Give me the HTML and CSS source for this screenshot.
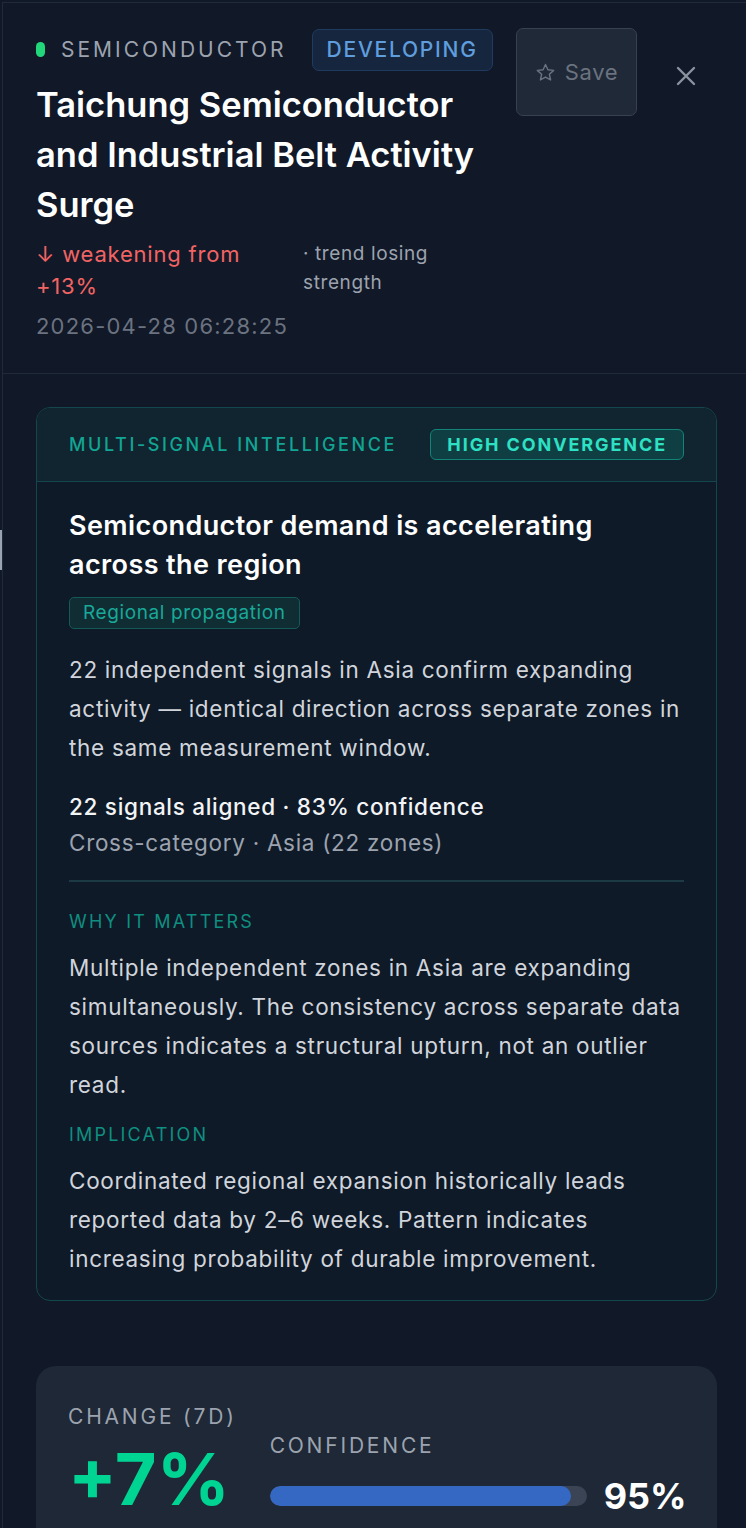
FILE: index.html
```html
<!DOCTYPE html>
<html lang="en">
<head>
<meta charset="UTF-8">
<meta name="viewport" content="width=device-width, initial-scale=1.0">
<title>Signal detail</title>
<link rel="stylesheet" href="styles.css">
</head>
<body>
    <div class="edge_tab"></div>
    <div class="panel">
        <div class="panel_head">
            <div class="head_main">
                <div class="meta_row">
                    <span class="cat_dot"></span>
                    <span class="cat_name">SEMICONDUCTOR</span>
                    <span class="status_badge">DEVELOPING</span>
                </div>
                <h1 class="event_title">Taichung Semiconductor and Industrial Belt Activity Surge</h1>
                <div class="trend_row">
                    <span class="trend_dir">↓ weakening from +13%</span>
                    <span class="trend_note">· trend losing strength</span>
                </div>
                <div class="stamp">2026-04-28 06:28:25</div>
            </div>
            <button class="save_btn">
                <svg width="21" height="21" viewBox="0 0 24 24" fill="none" stroke="currentColor" stroke-width="1.6" stroke-linejoin="round"><path d="M12 2.8l2.75 6.1 6.65.65-5 4.45 1.45 6.55L12 17.2l-5.85 3.35 1.45-6.55-5-4.45 6.65-.65z"/></svg>
                <span>Save</span>
            </button>
            <button class="close_btn" aria-label="Close">
                <svg width="20" height="20" viewBox="0 0 20 20" stroke="currentColor" stroke-width="2.4" stroke-linecap="round"><path d="M2 2L18 18M18 2L2 18"/></svg>
            </button>
        </div>

        <div class="panel_body">
            <div class="intel_card">
                <div class="intel_head">
                    <span class="intel_label">MULTI-SIGNAL INTELLIGENCE</span>
                    <span class="conv_badge">HIGH CONVERGENCE</span>
                </div>
                <div class="intel_body">
                    <h2 class="intel_title">Semiconductor demand is accelerating across the region</h2>
                    <span class="prop_tag">Regional propagation</span>
                    <p class="intel_text">22 independent signals in Asia confirm expanding activity — identical direction across separate zones in the same measurement window.</p>
                    <div class="intel_stats">
                        <div class="stats_main">22 signals aligned · 83% confidence</div>
                        <div class="stats_sub">Cross-category · Asia (22 zones)</div>
                    </div>
                    <div class="intel_divider"></div>
                    <div class="sub_label">WHY IT MATTERS</div>
                    <p class="intel_text tight">Multiple independent zones in Asia are expanding simultaneously. The consistency across separate data sources indicates a structural upturn, not an outlier read.</p>
                    <div class="sub_label second">IMPLICATION</div>
                    <p class="intel_text tight">Coordinated regional expansion historically leads reported data by 2–6 weeks. Pattern indicates increasing probability of durable improvement.</p>
                </div>
            </div>

            <div class="metric_card">
                <div class="metric_change">
                    <div class="metric_label">CHANGE (7D)</div>
                    <div class="change_value">+7%</div>
                </div>
                <div class="metric_conf">
                    <div class="metric_label">CONFIDENCE</div>
                    <div class="conf_row">
                        <div class="conf_track"><div class="conf_fill" style="width: 95%;"></div></div>
                        <span class="conf_value">95%</span>
                    </div>
                </div>
            </div>
        </div>
    </div>
</body>
</html>
```

FILE: styles.css
```css
body{
    margin: 0px;
    background-color: #111827;
    font-family: Inter, "Noto Sans", sans-serif;
    color: #e5e7eb;
}
.edge_tab{
    position: absolute;
    left: 0;
    top: 530px;
    width: 2px;
    height: 40px;
    background-color: #9aa3b0;
}
.panel{
    margin-left: 2px;
    margin-top: 2px;
    border-left: 1px solid #1f2a3a;
    border-top: 1px solid #1f2a3a;
    min-height: 1526px;
}
.panel_head{
    display: flex;
    align-items: flex-start;
    padding: 25px 40px 31px 33px;
    border-bottom: 1px solid #1f2a3a;
}
.head_main{
    flex: 1;
    min-width: 0;
}
.meta_row{
    display: flex;
    align-items: center;
    height: 43px;
}
.cat_dot{
    flex-shrink: 0;
    width: 9px;
    height: 15px;
    border-radius: 5px;
    background-color: #22d67a;
    margin-right: 16px;
}
.cat_name{
    font-size: 21px;
    letter-spacing: 3px;
    color: #9ca3af;
}
.status_badge{
    flex-shrink: 0;
    margin-left: 25px;
    height: 40px;
    display: flex;
    align-items: center;
    padding: 0 14px;
    border: 1.5px solid #1f3b60;
    background-color: #16263f;
    border-radius: 7px;
    color: #5f9ddd;
    font-size: 21px;
    font-weight: 500;
    letter-spacing: 1.75px;
}
.event_title{
    margin: 9px 0 0 0;
    font-size: 34.5px;
    line-height: 50px;
    font-weight: 600;
    color: #ffffff;
}
.trend_row{
    display: flex;
    margin-top: 8px;
}
.trend_dir{
    width: 245px;
    font-size: 22px;
    letter-spacing: 0.8px;
    line-height: 32px;
    color: #f26464;
    margin-right: 22px;
}
.trend_note{
    width: 150px;
    font-size: 19px;
    letter-spacing: 0.6px;
    line-height: 29px;
    color: #9ca3af;
    padding-top: 1px;
}
.stamp{
    margin-top: 8px;
    font-size: 22px;
    letter-spacing: 1.2px;
    line-height: 32px;
    color: #6b7280;
}
.save_btn{
    margin-left: 25px;
    width: 121px;
    height: 88px;
    display: flex;
    align-items: center;
    justify-content: center;
    gap: 9px;
    background-color: #1f2937;
    border: 1.5px solid #374151;
    border-radius: 7px;
    color: #6b7280;
    font-family: Inter, sans-serif;
    font-size: 22px;
    letter-spacing: 0.6px;
    padding: 0;
}
.close_btn{
    margin-left: 29px;
    margin-top: 35px;
    width: 40px;
    height: 26px;
    display: flex;
    align-items: center;
    justify-content: center;
    background: none;
    border: none;
    color: #8b93a0;
    padding: 0;
}
.panel_body{
    padding: 33px 29px 0 33px;
}
.intel_card{
    border: 1.5px solid #14474d;
    border-radius: 14px;
    background-color: #0f1a28;
    overflow: hidden;
}
.intel_head{
    display: flex;
    align-items: center;
    justify-content: space-between;
    height: 73px;
    padding: 0 32px;
    background-color: #10252f;
    border-bottom: 1.5px solid #14474d;
    white-space: nowrap;
}
.intel_label{
    font-size: 18px;
    font-weight: 500;
    letter-spacing: 2.6px;
    color: #12a594;
}
.conv_badge{
    flex-shrink: 0;
    height: 29px;
    display: flex;
    align-items: center;
    padding: 0 16px;
    background-color: #0f3f42;
    border: 1.5px solid #138378;
    border-radius: 6px;
    color: #2ee0c4;
    font-size: 18px;
    font-weight: 700;
    letter-spacing: 1.9px;
}
.intel_body{
    padding: 24px 32px 22px 32px;
}
.intel_title{
    margin: 0;
    font-size: 27px;
    letter-spacing: 0.4px;
    line-height: 39px;
    font-weight: 600;
    color: #ffffff;
}
.prop_tag{
    display: inline-block;
    margin-top: 13px;
    padding: 0 13px;
    height: 30px;
    line-height: 30px;
    border: 1.5px solid #145a58;
    background-color: #0f2d33;
    border-radius: 5px;
    color: #1aa898;
    font-size: 19px;
    letter-spacing: 0.6px;
}
.intel_text{
    margin: 21px 0 0 0;
    font-size: 22.5px;
    letter-spacing: 0.7px;
    line-height: 39px;
    color: #d1d5db;
}
.intel_text.tight{
    margin-top: 12px;
}
.intel_stats{
    margin-top: 22px;
    font-size: 22.5px;
    letter-spacing: 0.7px;
    line-height: 36px;
}
.stats_main{
    color: #f3f4f6;
    font-weight: 500;
}
.stats_sub{
    color: #9ca3af;
}
.intel_divider{
    margin-top: 19px;
    height: 1.5px;
    background-color: #1b3a44;
}
.sub_label{
    margin-top: 26px;
    font-size: 18px;
    line-height: 28px;
    letter-spacing: 2.2px;
    color: #0e8f80;
}
.sub_label.second{
    margin-top: 17px;
}
.metric_card{
    margin-top: 65px;
    display: flex;
    align-items: flex-start;
    gap: 33px;
    padding: 36px 32px 60px 32px;
    background-color: #1e2836;
    border-radius: 20px 20px 0 0;
}
.metric_label{
    font-size: 21px;
    line-height: 30px;
    letter-spacing: 2.8px;
    color: #9ca3af;
    white-space: nowrap;
}
.change_value{
    margin-top: 7px;
    font-size: 72px;
    font-weight: 700;
    line-height: 80px;
    color: #00d492;
}
.metric_conf{
    margin-top: 29px;
}
.conf_row{
    display: flex;
    align-items: center;
    gap: 17px;
    margin-top: 13px;
}
.conf_track{
    width: 317px;
    height: 20px;
    border-radius: 10px;
    background-color: #3a4455;
    overflow: hidden;
}
.conf_fill{
    height: 100%;
    border-radius: 10px;
    background-color: #3568c3;
}
.conf_value{
    font-size: 36px;
    font-weight: 700;
    color: #ffffff;
}
```
